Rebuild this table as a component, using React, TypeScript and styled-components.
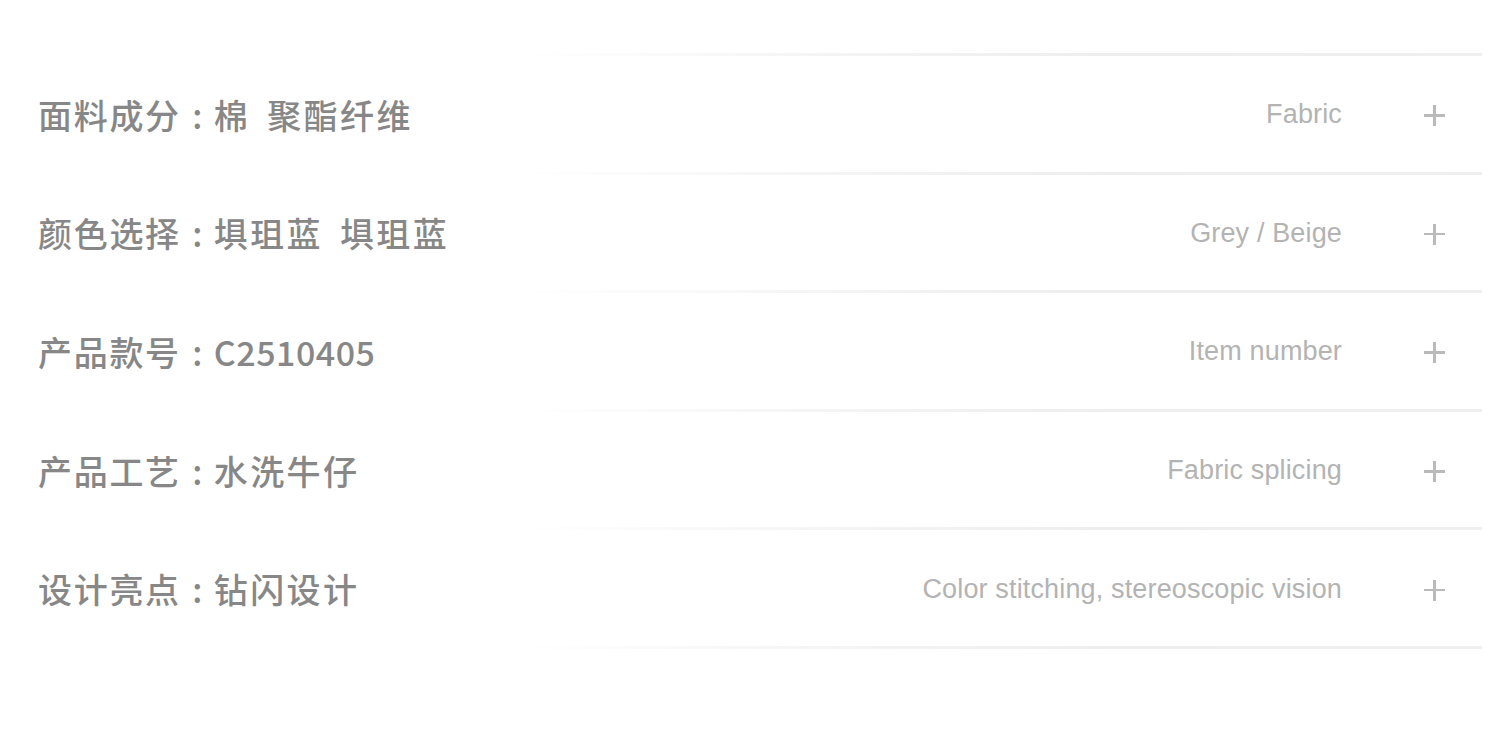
import React from 'react'
import styled, { createGlobalStyle } from 'styled-components'

const GlobalStyle = createGlobalStyle`
  html, body {
    margin: 0;
    padding: 0;
    background: #ffffff;
  }
`

const Page = styled.div`
  width: 1500px;
  height: 736px;
  box-sizing: border-box;
  padding: 53px 18px 0 38px;
  background: #fff;
`

const List = styled.div`
  display: flex;
  flex-flow: column;
`

const Divider = styled.div`
  height: 3px;
  margin-left: 480px;
  background: linear-gradient(
    to right,
    rgba(236, 236, 236, 0) 0%,
    rgba(238, 238, 238, 0.6) 30%,
    #eeeeee 60%,
    #efefef 100%
  );
`

const Row = styled.div`
  display: flex;
  align-items: center;
  height: 115.6px;
`

const Label = styled.div`
  flex: 1;
  display: flex;
  align-items: center;
  font-family: 'Noto Sans CJK SC', 'Noto Sans', sans-serif;
  font-size: 34px;
  font-weight: 500;
  color: #878787;
  letter-spacing: 1.7px;
  word-spacing: 7px;
  white-space: pre;
  padding-top: 1px;
`

const Colon = styled.span`
  display: inline-block;
  width: 33px;
  text-align: center;
  letter-spacing: 0;
`

const Value = styled.span<{ $latin?: boolean }>`
  letter-spacing: ${({ $latin }) => ($latin ? '0.5px' : '2.4px')};
`

const Note = styled.div`
  font-family: 'Liberation Sans', Arial, sans-serif;
  font-size: 27px;
  color: #b3b3b3;
  letter-spacing: 0.15px;
  padding-top: 2px;
`

const PlusIcon = styled.span`
  position: relative;
  width: 21px;
  height: 21px;
  margin: 4px 37px 0 82px;
  &:before, &:after {
    content: '';
    position: absolute;
    background-color: #bababa;
  }
  &:before {
    left: 0;
    top: 9px;
    width: 21px;
    height: 2.5px;
  }
  &:after {
    left: 9.25px;
    top: 0;
    width: 2.5px;
    height: 21px;
  }
`

const specs = [
  { name: '面料成分', value: '棉 聚酯纤维', note: 'Fabric' },
  { name: '颜色选择', value: '埧珇蓝 埧珇蓝', note: 'Grey / Beige' },
  { name: '产品款号', value: 'C2510405', note: 'Item number', latin: true },
  { name: '产品工艺', value: '水洗牛仔', note: 'Fabric splicing' },
  { name: '设计亮点', value: '钻闪设计', note: 'Color stitching, stereoscopic vision' },
]

export default function App() {
  return (
    <Page>
      <GlobalStyle />
      <List>
        <Divider />
        {specs.map((item) =>
          <React.Fragment key={item.name}>
            <Row>
              <Label>
                {item.name}
                <Colon>:</Colon>
                <Value $latin={item.latin}>{item.value}</Value>
              </Label>
              <Note>{item.note}</Note>
              <PlusIcon />
            </Row>
            <Divider />
          </React.Fragment>
        )}
      </List>
    </Page>
  )
}
